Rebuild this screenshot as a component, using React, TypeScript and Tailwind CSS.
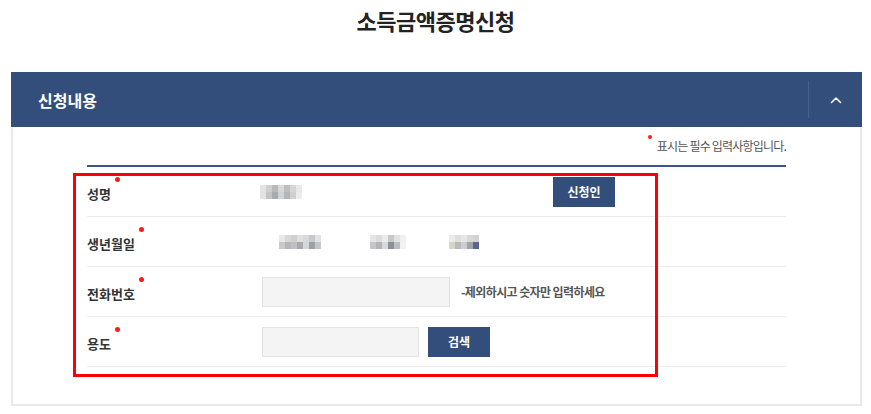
import type { ReactNode } from "react";

const FONT = { fontFamily: '"Noto Sans CJK KR", "Noto Sans", sans-serif' };

type MosaicProps = {
  cells: string[][];
  className?: string;
};

function Mosaic({ cells, className }: MosaicProps) {
  return (
    <div className={`flex flex-col blur-[0.6px] ${className ?? ""}`}>
      {cells.map((row, r) => (
        <div key={`m-row-${r}`} className="flex">
          {row.map((color, c) => (
            <span
              key={`m-cell-${r}-${c}`}
              className="block h-[7px] w-[6px]"
              style={{ backgroundColor: color }}
            ></span>
          ))}
        </div>
      ))}
    </div>
  );
}

function Label({ children }: { children: ReactNode }) {
  return (
    <div className="w-[175px] shrink-0">
      <span className="relative text-[13px] font-bold text-[#333]">
        {children}
        <span className="absolute -right-[9px] -top-[7px] h-[5px] w-[5px] rounded-full bg-[#ff1a1a]"></span>
      </span>
    </div>
  );
}

function Row({ label, children }: { label: string; children: ReactNode }) {
  return (
    <div className="flex h-[50px] items-center border-b border-[#ececec]">
      <Label>{label}</Label>
      <div className="flex flex-1 items-center">{children}</div>
    </div>
  );
}

function NavyButton({ children }: { children: ReactNode }) {
  return (
    <button className="flex h-[30px] w-[62px] items-center justify-center bg-[#344e7b] text-[12px] font-bold text-white">
      {children}
    </button>
  );
}

const nameCells = [
  ["#e4e4e4", "#d0cfcf", "#b9b9bb", "#d8d8d8", "#bdbdbf", "#d6d6d8", "#e8e8e8"],
  ["#e2e2e2", "#c4c3c4", "#a9aaad", "#d2d2d4", "#b4b5b8", "#cfd0d2", "#ececec"],
];

const yearCells = [
  ["#e8e8ea", "#d8d8da", "#d0cfd2", "#e0e0e0", "#d9d9db", "#c8c8cc", "#e2e2e4"],
  ["#c9c9cc", "#b7b7bb", "#c0c0c4", "#a8a9ae", "#d5d6d8", "#9fa0a6", "#c5c6c9"],
];

const monthCells = [
  ["#e6e6e6", "#dcdcdc", "#ebebeb", "#c8c8cc", "#e2e2e2", "#f0f0f0"],
  ["#c6c6c8", "#b4b4b8", "#d8d8da", "#8e8f95", "#bdbec2", "#f2f2f2"],
];

const dayCells = [
  ["#ecebe6", "#dedede", "#e6e6e6", "#d8d8d8", "#d2d2d6"],
  ["#d8d4c8", "#b9babd", "#cdcdcf", "#a3a4aa", "#5c6688"],
];

export default function App() {
  return (
    <div className="min-h-[414px] w-full bg-white" style={FONT}>
      <h1 className="h-[40px] text-center text-[22px] font-bold leading-[40px] tracking-[-0.5px] text-[#222]">
        소득금액증명신청
      </h1>

      <section className="ml-[11px] mr-[9px] mt-[32px]">
        <div className="flex h-[55px] items-center bg-[#344e7b]">
          <h2 className="flex-1 pl-[27px] text-[16px] font-bold text-white">
            신청내용
          </h2>
          <div className="h-[37px] w-px bg-[#48608c]"></div>
          <button className="flex h-full w-[53px] items-center justify-center">
            <svg width="12" height="8" viewBox="0 0 12 8" fill="none">
              <path
                d="M1.5 6.5 L6 2 L10.5 6.5"
                stroke="#ffffff"
                strokeWidth="1.5"
                strokeLinecap="round"
                strokeLinejoin="round"
              />
            </svg>
          </button>
        </div>

        <div className="border-2 border-t-0 border-[#e9e9e9] px-[74px] pb-[37px] pt-[9px]">
          <p className="flex h-[20px] items-center justify-end text-[12px] tracking-[-0.8px] text-[#555]">
            <span className="relative">
              <span className="absolute -left-[9px] -top-[2px] h-[4px] w-[4px] rounded-full bg-[#ff1a1a]"></span>
              표시는 필수 입력사항입니다.
            </span>
          </p>

          <div className="relative mt-[9px] border-t-2 border-[#3f5480]">
            <Row label="성명">
              <Mosaic cells={nameCells} className="-ml-[2px] w-[293px]" />
              <NavyButton>신청인</NavyButton>
            </Row>
            <Row label="생년월일">
              <Mosaic cells={yearCells} className="ml-[17px]" />
              <Mosaic cells={monthCells} className="ml-[49px]" />
              <Mosaic cells={dayCells} className="ml-[43px]" />
            </Row>
            <Row label="전화번호">
              <input
                className="h-[30px] w-[188px] border border-[#e3e3e3] bg-[#f4f4f4] outline-none"
                aria-label="전화번호"
              />
              <span className="ml-[11px] text-[12px] font-bold tracking-[-0.6px] text-[#555]">
                -제외하시고 숫자만 입력하세요
              </span>
            </Row>
            <Row label="용도">
              <input
                className="h-[30px] w-[157px] border border-[#e3e3e3] bg-[#f4f4f4] outline-none"
                aria-label="용도"
              />
              <div className="ml-[9px]">
                <NavyButton>검색</NavyButton>
              </div>
            </Row>

            <div className="pointer-events-none absolute -left-[14px] top-[6px] h-[204px] w-[585px] border-[3px] border-[#ff0000]"></div>
          </div>
        </div>
      </section>
    </div>
  );
}
